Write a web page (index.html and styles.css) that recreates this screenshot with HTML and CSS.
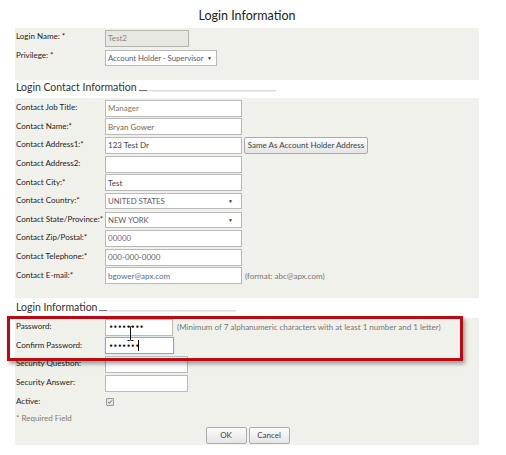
FILE: index.html
```html
<!DOCTYPE html>
<html>
<head>
<meta charset="utf-8">
<link rel="stylesheet" href="styles.css">
</head>
<body>
<div class="page">
  <h1 class="title">Login Information</h1>

  <div class="panel p1">
    <div class="grid g1">
      <label>Login Name: *</label>
      <div class="field"><input class="txt ro w84" value="Test2" readonly></div>
      <label>Privilege: *</label>
      <div class="field"><div class="sel w112"><span>Account Holder - Supervisor</span><span class="arr">▼</span></div></div>
    </div>
  </div>

  <div class="legend l2"><span class="ltext">Login Contact Information</span><span class="rule r137"></span></div>

  <div class="panel p2">
    <div class="grid">
      <label>Contact Job Title:</label>
      <div class="field"><input class="txt w137 c-brown" value="Manager"></div>
      <label>Contact Name:*</label>
      <div class="field"><input class="txt w137 c-rust" value="Bryan Gower"></div>
      <label>Contact Address1:*</label>
      <div class="field"><input class="txt w137 c-dark" value="123 Test Dr"><button class="btn btn-same">Same As Account Holder Address</button></div>
      <label>Contact Address2:</label>
      <div class="field"><input class="txt w137" value=""></div>
      <label>Contact City:*</label>
      <div class="field"><input class="txt w137 c-dark" value="Test"></div>
      <label>Contact Country:*</label>
      <div class="field"><div class="sel w137"><span>UNITED STATES</span><span class="arr">▼</span></div></div>
      <label>Contact State/Province:*</label>
      <div class="field"><div class="sel w137"><span>NEW YORK</span><span class="arr">▼</span></div></div>
      <label>Contact Zip/Postal:*</label>
      <div class="field"><input class="txt w137 c-purple" value="00000"></div>
      <label>Contact Telephone:*</label>
      <div class="field"><input class="txt w137" value="000-000-0000"></div>
      <label>Contact E-mail:*</label>
      <div class="field"><input class="txt w137 c-blue" value="bgower@apx.com"><span class="hint hint-email">(format: abc@apx.com)</span></div>
    </div>
  </div>

  <div class="legend l3"><span class="ltext">Login Information</span><span class="rule r137"></span></div>

  <div class="panel p3">
    <div class="grid">
      <label>Password:</label>
      <div class="field"><div class="txt w68 dots"><span>••••••••</span></div><span class="hint hint-pw">(Minimum of 7 alphanumeric characters with at least 1 number and 1 letter)</span></div>
      <label>Confirm Password:</label>
      <div class="field"><div class="txt w69 dots focus"><span>•••••••</span><span class="caret"></span></div></div>
      <label>Security Question:</label>
      <div class="field"><input class="txt w83" value=""></div>
      <label>Security Answer:</label>
      <div class="field"><input class="txt w83" value=""></div>
      <label>Active:</label>
      <div class="field"><span class="chk"><svg width="8" height="8" viewBox="0 0 8 8"><path d="M1.6 4.2 L3.2 5.8 L6.4 2" fill="none" stroke="#555" stroke-width="1.2"/></svg></span></div>
      <div class="req">* Required Field</div>
    </div>
    <div class="actions">
      <button class="btn btn-act">OK</button>
      <button class="btn btn-act">Cancel</button>
    </div>
  </div>

  <div class="highlight"></div>
  <svg class="ibeam" width="7" height="15" viewBox="0 0 7 15"><path d="M0.5 0.5 H2.5 Q3.5 0.5 3.5 1.5 Q3.5 0.5 4.5 0.5 H6.5 M3.5 1.5 V13.5 M0.5 14.5 H2.5 Q3.5 14.5 3.5 13.5 Q3.5 14.5 4.5 14.5 H6.5" fill="none" stroke="#111" stroke-width="1"/></svg>
</div>
</body>
</html>
```

FILE: styles.css
```css
* { box-sizing: border-box; }
html, body { margin: 0; padding: 0; background: #fff; }
body {
  font-family: Lato, "Liberation Sans", Arial, sans-serif;
  font-size: 8px;
  color: #333;
}
.page {
  position: relative;
  width: 506px;
  height: 455px;
  padding-left: 15px;
}
.title {
  width: 464px;
  height: 28px;
  margin: 0;
  padding-top: 9px;
  text-align: center;
  font-size: 12.5px;
  font-weight: normal;
  color: #222;
  line-height: 14px;
}
.panel {
  width: 464px;
  background: #f1f1ec;
}
.p1 { height: 52px; padding-top: 0.5px; }
.p2 { height: 200px; padding-top: 1px; }
.p3 { height: 127px; padding-top: 0; }

.grid {
  display: grid;
  grid-template-columns: 89px 1fr;
  grid-auto-rows: 18.6px;
  align-items: center;
  padding-left: 1px;
}
.g1 { grid-auto-rows: 19.5px; }
.grid label { color: #222; white-space: nowrap; line-height: 10px; margin-top: -2px; }
.g1 label { margin-top: -5px; }
.field { display: flex; align-items: center; height: 100%; }

.txt {
  height: 17px;
  border: 1px solid #b9b9b9;
  background: #fff;
  padding: 0 2px;
  font-family: inherit;
  font-size: 8px;
  color: #666;
  outline: none;
  margin: 0;
  display: flex;
  align-items: center;
}
input.txt { display: block; }
.ro { background: #e8e8e3; color: #888; border-color: #b5b5b0; }
.w84 { width: 84px; }
.w112 { width: 112px; }
.w137 { width: 137px; }
.w68 { width: 68px; }
.w69 { width: 69px; }
.w83 { width: 83px; }
.c-brown { color: #8a7866; }
.c-rust { color: #8d5b3e; }
.c-dark { color: #444; }
.c-purple { color: #7a5f86; }
.c-blue { color: #5a6a86; }

.sel {
  height: 16px;
  border: 1px solid #b9b9b9;
  background: #fff;
  padding: 0 4px 0 2px;
  display: flex;
  align-items: center;
  justify-content: space-between;
  color: #5a5a6a;
  white-space: nowrap;
  overflow: hidden;
  font-size: 7.8px;
  letter-spacing: -0.05px;
}
.arr { font-size: 5px; color: #333; margin-left: 3px; }
.w137.sel { padding-right: 8px; }

.dots { color: #111; letter-spacing: 0.2px; font-size: 6.5px; padding-left: 3px; font-family: "DejaVu Sans", sans-serif; font-weight: bold; }
.focus { border-color: #86a8dc; box-shadow: 0 0 1px #9dbbe8; }
.caret { display: inline-block; width: 1px; height: 11px; background: #000; margin-left: -1px; }

.btn {
  font-family: inherit;
  font-size: 8px;
  color: #444;
  height: 17px;
  padding: 0 5px;
  border: 1px solid #ababab;
  border-radius: 2px;
  background: linear-gradient(#fdfdfd, #e4e4e4);
  margin: 0;
}
.btn-same { width: 124px; margin-left: 2px; padding: 0; }
.btn-act { width: 41px; padding: 0; }

.hint { color: #777; white-space: nowrap; }
.hint-email { margin-left: 3px; }
.hint-pw { margin-left: 4px; }

.chk {
  display: flex;
  align-items: center;
  justify-content: center;
  width: 8px;
  height: 8px;
  border: 1px solid #9a9a9a;
  border-radius: 1px;
  background: #e6e6e6;
  margin-left: 1px;
  margin-top: 1px;
}
.req { grid-column: 1 / 3; color: #8a7a6e; height: 16px; line-height: 10px; margin-top: 2px; }

.actions {
  display: flex;
  justify-content: center;
  gap: 2px;
  margin-top: -3px;
  padding-left: 1px;
}

.legend {
  width: 464px;
  display: flex;
  align-items: flex-end;
  padding-left: 1px;
}
.l2 { height: 18px; padding-bottom: 5px; }
.l3 { height: 20px; padding-bottom: 5px; }
.ltext { font-size: 10.5px; color: #333; line-height: 11px; }
.rule {
  height: 2px;
  margin-left: 2px;
  margin-bottom: 1px;
  background: linear-gradient(90deg, #777 0, #777 8px, #ddd 8px);
  border-bottom: 1px solid #eee;
}
.r137 { width: 137px; }

.highlight {
  position: absolute;
  left: 7px;
  top: 316px;
  width: 456px;
  height: 45px;
  border: 3px solid #bb0b12;
  box-shadow: 2px 3px 4px rgba(0,0,0,0.35);
  pointer-events: none;
}
.ibeam {
  position: absolute;
  left: 127px;
  top: 326px;
}
```
